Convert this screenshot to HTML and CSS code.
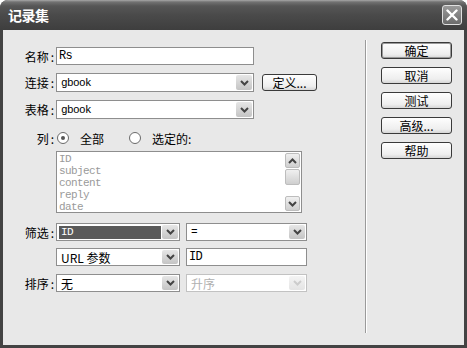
FILE: index.html
```html
<!DOCTYPE html>
<html lang="zh-CN">
<head>
    <meta charset="UTF-8">
    <title>记录集</title>
    <link rel="stylesheet" href="styles.css">
</head>
<body>
    <div class="window">
        <div class="titlebar">
            <span class="title">记录集</span>
            <span class="close">
                <svg width="12" height="12" viewBox="0 0 12 12"><path d="M1.5 1.5 L10.5 10.5 M10.5 1.5 L1.5 10.5" stroke="#fff" stroke-width="2.4" stroke-linecap="round"/></svg>
            </span>
        </div>
        <div class="client">
            <div class="form">
                <div class="row row-name">
                    <span class="lbl">名称<i>:</i></span>
                    <div class="input wide mono">Rs</div>
                </div>
                <div class="row row-conn">
                    <span class="lbl">连接<i>:</i></span>
                    <div class="select wide">
                        <span class="val mono">gbook</span>
                        <span class="drop"><svg width="9" height="6" viewBox="0 0 9 6"><polyline points="1,1 4.5,4.5 8,1" fill="none" stroke="#444" stroke-width="2"/></svg></span>
                    </div>
                    <button class="btn btn-def">定义...</button>
                </div>
                <div class="row row-table">
                    <span class="lbl">表格<i>:</i></span>
                    <div class="select wide">
                        <span class="val mono">gbook</span>
                        <span class="drop"><svg width="9" height="6" viewBox="0 0 9 6"><polyline points="1,1 4.5,4.5 8,1" fill="none" stroke="#444" stroke-width="2"/></svg></span>
                    </div>
                </div>
                <div class="row row-cols">
                    <span class="lbl">列<i>:</i></span>
                    <span class="radio checked"></span>
                    <span class="radio-text">全部</span>
                    <span class="radio"></span>
                    <span class="radio-text">选定的:</span>
                </div>
                <div class="row row-list">
                    <span class="lbl"></span>
                    <div class="listbox">
                        <div class="items mono">
                            <div>ID</div>
                            <div>subject</div>
                            <div>content</div>
                            <div>reply</div>
                            <div>date</div>
                        </div>
                        <div class="scroll">
                            <span class="sb-btn"><svg width="9" height="6" viewBox="0 0 9 6"><polyline points="1,5 4.5,1.5 8,5" fill="none" stroke="#444" stroke-width="2"/></svg></span>
                            <span class="sb-thumb"></span>
                            <span class="sb-space"></span>
                            <span class="sb-btn"><svg width="9" height="6" viewBox="0 0 9 6"><polyline points="1,1 4.5,4.5 8,1" fill="none" stroke="#444" stroke-width="2"/></svg></span>
                        </div>
                    </div>
                </div>
                <div class="row row-filter">
                    <span class="lbl">筛选<i>:</i></span>
                    <div class="select half">
                        <span class="val mono"><span class="hilite">ID</span></span>
                        <span class="drop"><svg width="9" height="6" viewBox="0 0 9 6"><polyline points="1,1 4.5,4.5 8,1" fill="none" stroke="#444" stroke-width="2"/></svg></span>
                    </div>
                    <div class="select half2">
                        <span class="val mono">=</span>
                        <span class="drop"><svg width="9" height="6" viewBox="0 0 9 6"><polyline points="1,1 4.5,4.5 8,1" fill="none" stroke="#444" stroke-width="2"/></svg></span>
                    </div>
                </div>
                <div class="row row-param">
                    <span class="lbl"></span>
                    <div class="select half">
                        <span class="val">URL 参数</span>
                        <span class="drop"><svg width="9" height="6" viewBox="0 0 9 6"><polyline points="1,1 4.5,4.5 8,1" fill="none" stroke="#444" stroke-width="2"/></svg></span>
                    </div>
                    <div class="input half2 mono">ID</div>
                </div>
                <div class="row row-sort">
                    <span class="lbl">排序<i>:</i></span>
                    <div class="select half">
                        <span class="val">无</span>
                        <span class="drop"><svg width="9" height="6" viewBox="0 0 9 6"><polyline points="1,1 4.5,4.5 8,1" fill="none" stroke="#444" stroke-width="2"/></svg></span>
                    </div>
                    <div class="select half2 disabled">
                        <span class="val">升序</span>
                        <span class="drop"><svg width="9" height="6" viewBox="0 0 9 6"><polyline points="1,1 4.5,4.5 8,1" fill="none" stroke="#ccc" stroke-width="2"/></svg></span>
                    </div>
                </div>
            </div>
            <div class="side">
                <button class="btn btn-side default">确定</button>
                <button class="btn btn-side">取消</button>
                <button class="btn btn-side">测试</button>
                <button class="btn btn-side">高级...</button>
                <button class="btn btn-side">帮助</button>
            </div>
        </div>
    </div>
</body>
</html>
```

FILE: styles.css
```css
* {
    box-sizing: border-box;
}
body {
    margin: 0;
    background: #fff;
    font-family: "Noto Sans CJK SC", sans-serif;
    font-size: 12px;
    color: #000;
}
.window {
    width: 467px;
    height: 348px;
    display: flex;
    flex-direction: column;
    background: #434343;
    border-radius: 8px 8px 0 0;
    overflow: hidden;
}
.titlebar {
    height: 30px;
    flex: none;
    display: flex;
    align-items: center;
    padding: 0 5px 0 8px;
    background: linear-gradient(#a8a8a8 0, #727272 2px, #565656 6px, #4a4a4a 50%, #3e3e3e 100%);
}
.title {
    flex: 1;
    color: #fff;
    font-weight: bold;
    font-size: 14px;
    letter-spacing: -0.5px;
}
.close {
    width: 20px;
    height: 20px;
    border: 1px solid #e0e0e0;
    border-radius: 3px;
    background: linear-gradient(#9a9a9a, #6c6c6c);
    display: flex;
    align-items: center;
    justify-content: center;
}
.client {
    flex: 1;
    margin: 0 3px 3px;
    background: #e8e8e8;
    display: flex;
}
.form {
    width: 362px;
    padding-top: 17px;
}
.row {
    display: flex;
    align-items: center;
}
.lbl {
    width: 53px;
    flex: none;
    text-align: right;
    padding-right: 2px;
}
.lbl i {
    font-style: normal;
    margin-left: 2px;
}
.mono {
    font-family: "Liberation Mono", monospace;
    letter-spacing: -0.6px;
}
.input, .select {
    border: 1px solid #8e8e8e;
    background: #fff;
}
.input {
    height: 18px;
    padding: 0 2px;
    line-height: 16px;
    font-size: 12px;
}
.select {
    display: flex;
    align-items: stretch;
    height: 19px;
    padding: 1px;
}
.select .val {
    flex: 1;
    display: flex;
    align-items: center;
    padding-left: 3px;
    font-size: 12px;
    white-space: nowrap;
}
.select .val.mono {
    font-size: 11px;
}
.drop {
    width: 16px;
    flex: none;
    border-radius: 2px;
    background: linear-gradient(#e6e6e6, #c4c4c4);
    display: flex;
    align-items: center;
    justify-content: center;
}
.wide {
    width: 198px;
}
.half {
    width: 124px;
}
.half2 {
    width: 121px;
    margin-left: 6px;
}
.row-name {
    height: 18px;
}
.row-conn {
    margin-top: 8px;
}
.row-table {
    margin-top: 8px;
}
.row-cols {
    margin-top: 12px;
    height: 14px;
}
.radio {
    width: 12px;
    height: 12px;
    border: 1px solid #6a6a6a;
    border-radius: 50%;
    background: #fff;
    display: flex;
    align-items: center;
    justify-content: center;
    margin-left: 1px;
}
.radio.checked::after {
    content: "";
    width: 4px;
    height: 4px;
    border-radius: 50%;
    background: #555;
}
.radio-text {
    margin-left: 11px;
    margin-right: 24px;
}
.row-list {
    margin-top: 6px;
    align-items: flex-start;
}
.listbox {
    width: 246px;
    height: 62px;
    border: 1px solid #8e8e8e;
    background: #fff;
    display: flex;
    padding: 1px 1px 1px 2px;
}
.items {
    flex: 1;
    color: #9a9a9a;
    font-size: 11px;
    line-height: 12px;
}
.scroll {
    width: 15px;
    display: flex;
    flex-direction: column;
}
.sb-btn, .sb-thumb {
    height: 15px;
    border: 1px solid #bdbdbd;
    border-radius: 2px;
    background: linear-gradient(#f0f0f0, #cfcfcf);
    display: flex;
    align-items: center;
    justify-content: center;
}
.sb-thumb {
    margin-top: 1px;
    height: 16px;
}
.sb-space {
    flex: 1;
}
.row-filter {
    margin-top: 10px;
}
.row-filter .select, .row-param .select, .row-sort .select {
    height: 18px;
}
.hilite {
    display: block;
    width: 102px;
    height: 13px;
    line-height: 13px;
    margin-left: -2px;
    padding-left: 2px;
    background: #5a5a5a;
    color: #fff;
}
.row-param {
    margin-top: 7px;
}
.row-param .input {
    height: 18px;
}
.row-sort {
    margin-top: 8px;
}
.select.disabled {
    border-color: #c2c2c2;
    color: #b0b0b0;
}
.select.disabled .drop {
    background: linear-gradient(#f4f4f4, #e4e4e4);
}
.btn {
    font-family: "Noto Sans CJK SC", sans-serif;
    font-size: 12px;
    color: #000;
    border: 1px solid #3a3a3a;
    border-radius: 3px;
    background: linear-gradient(#fefefe, #eeeeee 75%, #d6d6d6);
    padding: 0;
    line-height: 15px;
    height: 17px;
}
.btn-def {
    width: 55px;
    margin-left: 8px;
}
.side {
    flex: 1;
    margin: 10px 0 12px;
    border-left: 1px solid #9a9a9a;
    box-shadow: inset 1px 0 #fff;
    padding: 2px 0 0 15px;
    display: flex;
    flex-direction: column;
    gap: 8px;
}
.btn-side {
    width: 71px;
}
.btn-side.default {
    box-shadow: inset 0 0 0 1px #9a9a9a;
}
```
